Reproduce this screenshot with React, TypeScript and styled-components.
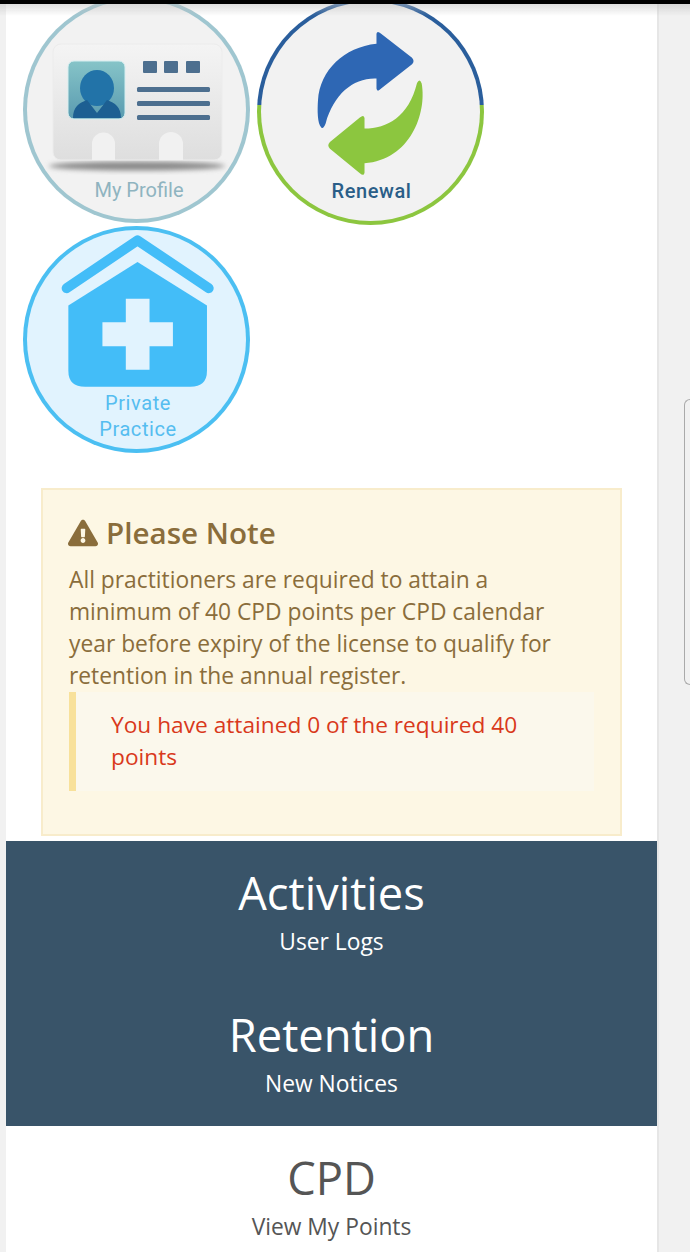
import { createGlobalStyle } from "styled-components";
import styled from "styled-components";
import { FaExclamationTriangle } from "react-icons/fa";

const GlobalStyle = createGlobalStyle`
    html, body {
        margin: 0;
        padding: 0;
        height: 1252px;
        overflow: hidden;
        background-color: #f1f1f1;
        font-family: "Open Sans", "Liberation Sans", sans-serif;
    }
`;

//black status strip and its soft shadow, sits over the page
const TopBar = styled.div`
    position: fixed;
    top: 0;
    left: 0;
    right: 0;
    height: 4px;
    background-color: #000;
    z-index: 3;
    &::after {
        content: "";
        position: absolute;
        top: 4px;
        left: 0;
        right: 0;
        height: 12px;
        background: linear-gradient(to bottom, rgba(190, 190, 190, 0.5), rgba(190, 190, 190, 0));
    }
`;

//edge handle on the right of the phone screen
const EdgeHandle = styled.div`
    position: fixed;
    top: 399px;
    right: 0;
    width: 5px;
    height: 284px;
    border: 1.5px solid #aaa;
    border-right: none;
    border-radius: 8px 0 0 8px;
    z-index: 3;
`;

const Panel = styled.main`
    width: 651px;
    margin: -4px 0 0 6px;
    background-color: #fff;
    border-right: 2px solid #e6e6e6;
`;

const TileGrid = styled.div`
    display: grid;
    grid-template-columns: repeat(2, 227px);
    column-gap: 7px;
    row-gap: 1px;
    align-items: start;
    padding-left: 17px;
`;

const Tile = styled.a<{ $ring: string; $fill: string; $pad: number; $drop?: number }>`
    display: flex;
    flex-direction: column;
    align-items: center;
    box-sizing: border-box;
    width: 227px;
    height: 227px;
    margin-top: ${(props) => props.$drop ?? 0}px;
    padding-top: ${(props) => props.$pad}px;
    border: 4px solid transparent;
    border-radius: 50%;
    background:
        linear-gradient(${(props) => props.$fill}, ${(props) => props.$fill}) padding-box,
        ${(props) => props.$ring} border-box;
`;

//$lift and $nudge carry the small offset each badge picture has for its caption
const TileLabel = styled.span<{ $color: string; $weight?: number; $spacing?: number; $lift?: number; $nudge?: number }>`
    margin-top: ${(props) => props.$lift ?? 0}px;
    margin-left: ${(props) => props.$nudge ?? 0}px;
    font-family: "Roboto", "Liberation Sans", sans-serif;
    font-size: 20px;
    font-weight: ${(props) => props.$weight ?? 400};
    line-height: 26px;
    letter-spacing: ${(props) => props.$spacing ?? 0.6}px;
    text-align: center;
    color: ${(props) => props.$color};
`;

const Alert = styled.section`
    box-sizing: border-box;
    width: 581px;
    height: 348px;
    margin: 35px 0 5px 35px;
    padding: 24px 26px 0;
    background-color: #fdf7e4;
    border: 2px solid #f8eccb;
    color: #8a6d3b;
`;

const AlertTitle = styled.h4`
    display: flex;
    align-items: center;
    gap: 8px;
    margin: 0 0 12px;
    font-size: 29.6px;
    font-weight: 600;
    line-height: 38px;
    svg {
        width: 30px;
        height: 30px;
        margin-left: -1px;
    }
`;

const AlertBody = styled.p`
    margin: 0;
    font-size: 22.8px;
    line-height: 32px;
`;

const Quote = styled.blockquote`
    margin: 0;
    padding: 17px 35px 18px;
    border-left: 7px solid #f8e19a;
    background-color: #fbf8ec;
    color: #d9391b;
    font-size: 22.7px;
    line-height: 32px;
`;

const Stats = styled.section<{ $dark?: boolean }>`
    padding-top: 17px;
    padding-bottom: ${(props) => (props.$dark ? 28 : 40)}px;
    background-color: ${(props) => (props.$dark ? "#395469" : "#fff")};
    color: ${(props) => (props.$dark ? "#fff" : "#555")};
    text-align: center;
`;

const Stat = styled.a`
    display: block;
    height: 142px;
    &:last-child {
        height: auto;
    }
`;

const StatTitle = styled.div`
    font-size: 45.3px;
    line-height: 70px;
`;

const StatText = styled.div`
    font-size: 22.8px;
    line-height: 28px;
`;

function ProfileIcon() {
    return (
        <svg width="190" height="135" viewBox="0 0 190 135">
            <defs>
                <linearGradient id="cardFill" x1="0" y1="0" x2="0" y2="1">
                    <stop offset="0" stopColor="#f4f4f4" />
                    <stop offset="1" stopColor="#dedede" />
                </linearGradient>
                <linearGradient id="photoFill" x1="0" y1="0" x2="0" y2="1">
                    <stop offset="0" stopColor="#86c4c8" />
                    <stop offset="1" stopColor="#5a9bb0" />
                </linearGradient>
                <filter id="soft" x="-10%" y="-100%" width="120%" height="300%">
                    <feGaussianBlur stdDeviation="2.5" />
                </filter>
            </defs>
            <ellipse cx="95" cy="126" rx="88" ry="4.5" fill="#8a8a8a" filter="url(#soft)" />
            <rect x="11" y="4" width="169" height="116" rx="8" fill="url(#cardFill)" stroke="#ececec" strokeWidth="1" />
            <path d="M50 120v-16a11.500 11.500 0 0 1 23 0v16z" fill="#f1f1f1" />
            <path d="M117 120v-16a12 12 0 0 1 24 0v16z" fill="#f1f1f1" />
            <rect x="26" y="21" width="57" height="58" rx="6" fill="url(#photoFill)" stroke="#d5eef0" strokeWidth="1" />
            <ellipse cx="55" cy="48" rx="17" ry="18" fill="#2273a8" />
            <path d="M31 78c0-11 6-15 14-18l10 13 10-13c8 3 14 7 14 18z" fill="#1d5f92" />
            <rect x="101" y="21" width="14" height="12" rx="1" fill="#4d6f8f" />
            <rect x="122" y="21" width="14" height="12" rx="1" fill="#4d6f8f" />
            <rect x="144" y="21" width="14" height="12" rx="1" fill="#4d6f8f" />
            <rect x="95" y="47" width="73" height="5" rx="1.500" fill="#4d6f8f" />
            <rect x="95" y="61" width="73" height="5" rx="1.500" fill="#4d6f8f" />
            <rect x="95" y="75" width="73" height="5" rx="1.500" fill="#4d6f8f" />
        </svg>
    );
}

function RenewalIcon() {
    return (
        <svg width="113" height="153" viewBox="190 80 340 460">
            <path
                d="M212 382C200 370 200 330 202 300C208 210 280 140 378 130L378 100Q380 90 392 100L485 172Q494 182 485 192L392 265Q380 278 378 265L378 235C310 232 250 280 225 370Q218 388 212 382Z"
                fill="#2e67b4"
            />
            <path
                d="M500 248Q508 232 514 250C530 340 480 480 342 490L342 518Q340 530 328 520L238 446Q228 436 238 426L328 352Q340 342 342 354L342 385C410 385 475 350 500 248Z"
                fill="#8cc63f"
            />
        </svg>
    );
}

function PracticeIcon() {
    return (
        <svg width="157" height="157" viewBox="144 40 470 470">
            <path d="M170 208L382 65L595 208" fill="none" stroke="#43bdf8" strokeWidth="30" strokeLinecap="round" strokeLinejoin="round" />
            <path d="M175 260L382 130L590 260L590 455Q590 503 540 503L225 503Q175 503 175 455Z" fill="#43bdf8" />
            <path d="M347 240H418V310H488V382H418V452H347V382H277V310H347Z" fill="#e1f3fe" />
        </svg>
    );
}

export default function App() {
    return (
        <>
            <GlobalStyle />
            <TopBar />
            <EdgeHandle />
            <Panel>
                <TileGrid>
                    <Tile $ring="linear-gradient(#9fc6d0, #9fc6d0)" $fill="#f2f2f2" $pad={40}>
                        <ProfileIcon />
                        <TileLabel $color="#8fb4c0" $spacing={0} $lift={2} $nudge={5}>My Profile</TileLabel>
                    </Tile>
                    <Tile
                        $ring="linear-gradient(to bottom, #2a5e9c 47%, #8cc63f 47%)"
                        $fill="#f2f2f2"
                        $pad={25}
                        $drop={2}
                    >
                        <RenewalIcon />
                        <TileLabel $color="#2a5e88" $weight={500} $lift={-2} $nudge={2}>Renewal</TileLabel>
                    </Tile>
                    <Tile $ring="linear-gradient(#4bbff2, #4bbff2)" $fill="#e1f3fe" $pad={2}>
                        <PracticeIcon />
                        <TileLabel $color="#55bdf0" $lift={1} $nudge={3}>Private<br />Practice</TileLabel>
                    </Tile>
                </TileGrid>
                <Alert>
                    <AlertTitle>
                        <FaExclamationTriangle />
                        Please Note
                    </AlertTitle>
                    <AlertBody>
                        All practitioners are required to attain a minimum of 40 CPD points per CPD calendar year before expiry of the license to qualify for retention in the annual register.
                    </AlertBody>
                    <Quote>You have attained 0 of the required 40 points</Quote>
                </Alert>
                <Stats $dark>
                    <Stat>
                        <StatTitle>Activities</StatTitle>
                        <StatText>User Logs</StatText>
                    </Stat>
                    <Stat>
                        <StatTitle>Retention</StatTitle>
                        <StatText>New Notices</StatText>
                    </Stat>
                </Stats>
                <Stats>
                    <Stat>
                        <StatTitle>CPD</StatTitle>
                        <StatText>View My Points</StatText>
                    </Stat>
                </Stats>
            </Panel>
        </>
    );
}
